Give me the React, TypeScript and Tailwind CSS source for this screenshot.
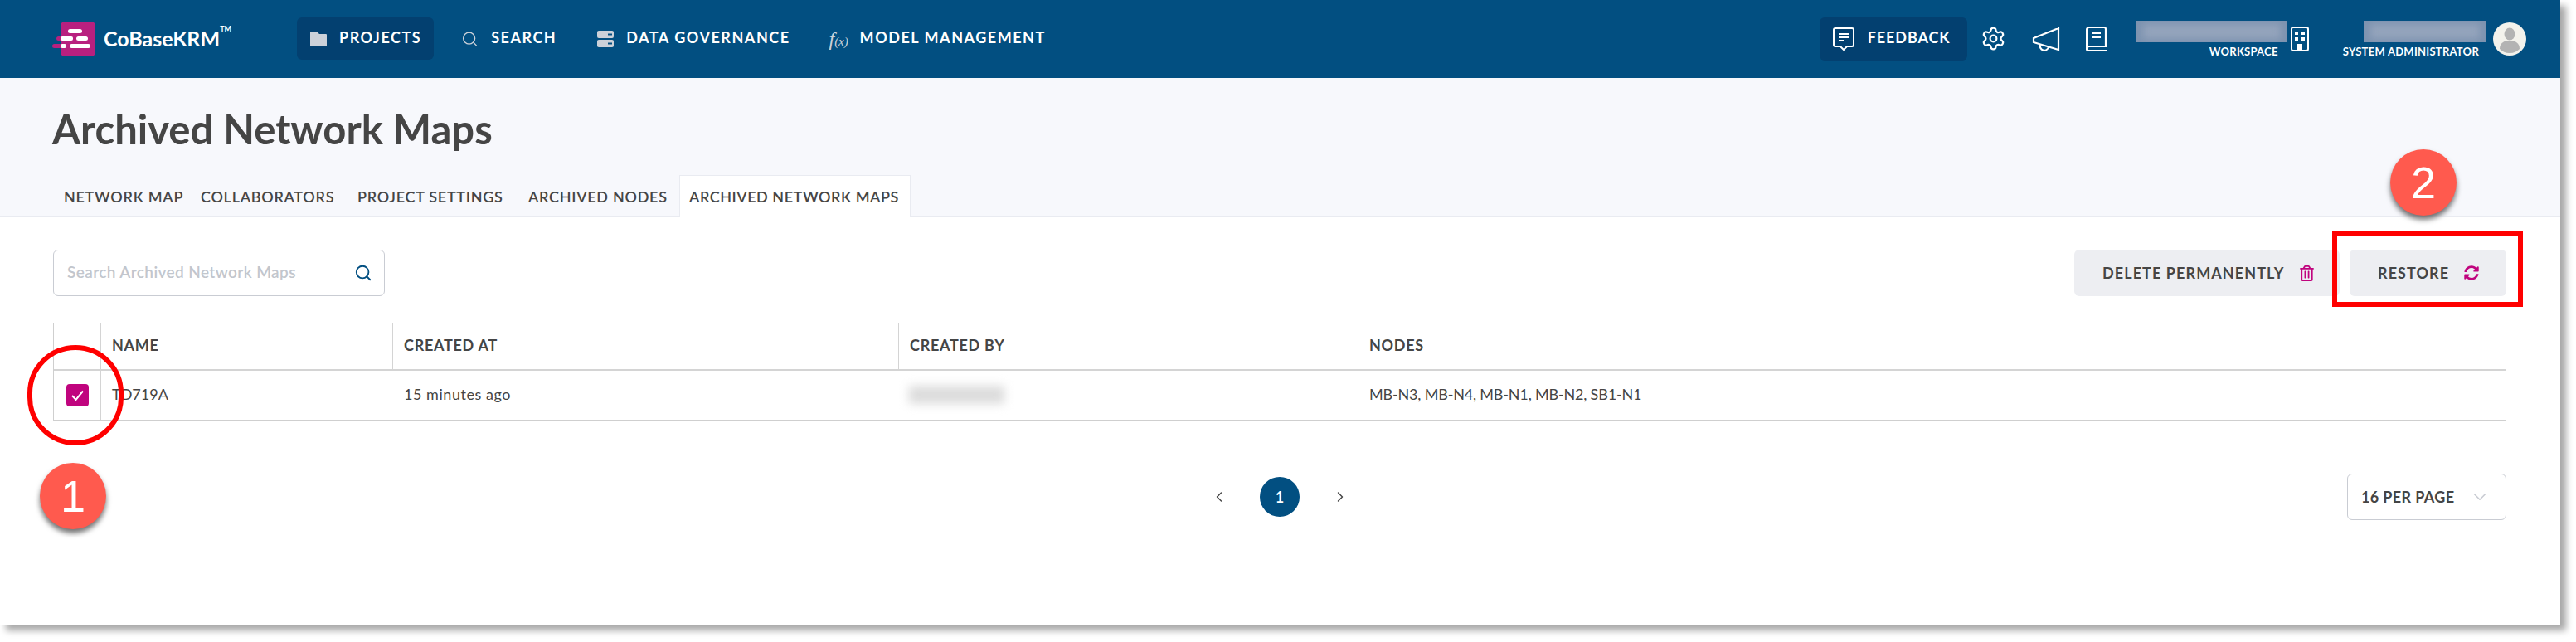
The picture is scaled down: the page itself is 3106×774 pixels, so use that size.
import { ChevronDown, ChevronLeft, ChevronRight, Search, Settings } from 'lucide-react';
import { FaRegTrashAlt, FaSyncAlt } from 'react-icons/fa';

const FONT = "font-['Lato','Liberation_Sans',sans-serif]";

function Logo() {
  return (
    <svg width="52" height="42" viewBox="0 0 52 42" className="shrink-0">
      <rect x="10" y="0" width="42" height="42" rx="5" fill="#b8207f" />
      <rect x="19" y="9" width="17" height="5" rx="2.5" fill="#fff" />
      <rect x="5" y="18" width="8" height="5" rx="2.5" fill="#b8207f" />
      <rect x="10" y="18" width="15" height="5" rx="2" fill="#fff" />
      <rect x="29" y="18" width="14" height="5" rx="2.5" fill="#fff" />
      <rect x="0" y="27" width="12" height="5" rx="2.5" fill="#b8207f" />
      <rect x="10" y="27" width="7" height="5" rx="2" fill="#fff" />
      <rect x="21" y="27" width="25" height="5" rx="2.5" fill="#fff" />
    </svg>
  );
}

function FolderIcon() {
  return (
    <svg width="20" height="18" viewBox="0 0 20 18" fill="#ccd1d9">
      <path d="M1 0h7l3 3h8a1 1 0 0 1 1 1v13a1 1 0 0 1-1 1H1a1 1 0 0 1-1-1V1a1 1 0 0 1 1-1z" />
    </svg>
  );
}

function DataIcon() {
  return (
    <svg width="20" height="20" viewBox="0 0 20 20">
      <rect y="0" width="20" height="9" rx="2" fill="#ccd1d9" />
      <rect y="11" width="20" height="9" rx="2" fill="#ccd1d9" />
      <rect x="13" y="3.5" width="2" height="2" fill="#024f81" />
      <rect x="16" y="3.5" width="2" height="2" fill="#024f81" />
      <rect x="13" y="14.5" width="2" height="2" fill="#024f81" />
      <rect x="16" y="14.5" width="2" height="2" fill="#024f81" />
    </svg>
  );
}

function FeedbackIcon() {
  return (
    <svg width="26" height="28" viewBox="0 0 26 28" fill="none" stroke="#fff" strokeWidth="2">
      <path d="M3 1h20a2 2 0 0 1 2 2v18a2 2 0 0 1-2 2h-6l-4 4-4-4H3a2 2 0 0 1-2-2V3a2 2 0 0 1 2-2z" />
      <path d="M7 8h12M7 12h12M7 16h6" />
    </svg>
  );
}

function MegaphoneIcon() {
  return (
    <svg width="34" height="30" viewBox="0 0 34 30" fill="none" stroke="#fff" strokeWidth="2.2">
      <path d="M32 1v28M32 2L2 14v5l30 9" />
      <path d="M10 22a5 5 0 0 0 10 3" />
    </svg>
  );
}

function BookIcon() {
  return (
    <svg width="26" height="30" viewBox="0 0 26 30" fill="none" stroke="#fff" strokeWidth="2.2">
      <path d="M5 1h17a2 2 0 0 1 2 2v21H4a3 3 0 0 0-3 3V4a3 3 0 0 1 3-3z" />
      <path d="M1 27a2 2 0 0 0 2 2h22M8 8h10M8 13h10" />
    </svg>
  );
}

function BuildingIcon() {
  return (
    <svg width="22" height="30" viewBox="0 0 22 30" fill="none">
      <rect x="1" y="1" width="20" height="28" rx="2" stroke="#fff" strokeWidth="2" />
      <g fill="#fff">
        <rect x="5" y="6" width="4" height="4" />
        <rect x="13" y="6" width="4" height="4" />
        <rect x="5" y="13" width="4" height="4" />
        <rect x="13" y="13" width="4" height="4" />
        <rect x="8" y="21" width="6" height="8" />
      </g>
    </svg>
  );
}

function Avatar() {
  return (
    <svg width="40" height="40" viewBox="0 0 40 40" className="shrink-0">
      <circle cx="20" cy="20" r="20" fill="#f3f2ec" />
      <ellipse cx="20" cy="14" rx="6.5" ry="7.5" fill="#b3b3b3" />
      <path d="M8 32c0-7 5-10 12-10s12 3 12 10c-3 3-7 5-12 5s-9-2-12-5z" fill="#b3b3b3" />
    </svg>
  );
}

function BlurName({ width }: { width: string }) {
  return (
    <div className={`${width} h-[26px] overflow-hidden bg-[#7d93b0]`}>
      <div className="mx-2 my-1 h-[18px] bg-[#94a4bc] blur-[5px]" />
    </div>
  );
}

function NavItem({ icon, label, active }: { icon: React.ReactNode; label: string; active?: boolean }) {
  return (
    <div
      className={`flex h-[51px] items-center gap-[15px] rounded-md px-[15px] text-[18px] font-bold tracking-[0.085em] text-white ${
        active ? 'bg-[#034070]' : ''
      }`}
    >
      <span className="flex w-[21px] justify-center">{icon}</span>
      <span className="pb-[2px]">{label}</span>
    </div>
  );
}

function Header() {
  return (
    <header className="flex h-[94px] items-center bg-[#024f81] pb-[1px] pl-[63px] pr-[41px]">
      <div className="flex w-[295px] items-center gap-[10px] text-white">
        <Logo />
        <span className="relative text-[25px] font-bold leading-none">
          CoBaseKRM
          <sup className="absolute -right-[14px] top-[1px] text-[9px] font-bold">TM</sup>
        </span>
      </div>
      <nav className="flex items-center gap-[18px]">
        <NavItem active icon={<FolderIcon />} label="PROJECTS" />
        <NavItem icon={<Search size={24} color="#ccd1d9" strokeWidth={1.6} />} label="SEARCH" />
        <NavItem icon={<DataIcon />} label="DATA GOVERNANCE" />
        <NavItem
          icon={
            <span className="whitespace-nowrap font-['Liberation_Serif',serif] text-[24px] font-normal italic leading-none tracking-normal text-[#ccd1d9]">
              f<span className="text-[15px]">(x)</span>
            </span>
          }
          label="MODEL MANAGEMENT"
        />
      </nav>
      <div className="ml-auto flex items-center">
        <div className="flex h-[52px] w-[178px] items-center gap-[16px] rounded-md bg-[#034070] px-[16px] text-[18px] font-bold tracking-[0.05em] text-white">
          <FeedbackIcon />
          <span className="pb-[2px]">FEEDBACK</span>
        </div>
        <div className="ml-[16px] flex items-center gap-[31px]">
          <Settings size={31} color="#fff" strokeWidth={1.7} />
          <MegaphoneIcon />
          <BookIcon />
        </div>
        <div className="ml-[35px] flex items-center gap-[4px]">
          <div className="flex flex-col items-end">
            <BlurName width="w-[182px]" />
            <span className="mr-[11px] mt-[5px] text-[13px] font-bold leading-[12px] tracking-[0.02em] text-white">WORKSPACE</span>
          </div>
          <BuildingIcon />
        </div>
        <div className="ml-[41px] flex items-center gap-[8px]">
          <div className="flex flex-col items-end">
            <BlurName width="w-[148px]" />
            <span className="mr-[9px] mt-[5px] text-[13px] font-bold leading-[12px] tracking-[0.02em] text-white">SYSTEM ADMINISTRATOR</span>
          </div>
          <Avatar />
        </div>
      </div>
    </header>
  );
}

const tabs = [
  { label: 'NETWORK MAP', width: 'w-[165px]' },
  { label: 'COLLABORATORS', width: 'w-[189px]' },
  { label: 'PROJECT SETTINGS', width: 'w-[206px]' },
  { label: 'ARCHIVED NODES', width: 'w-[194px]' },
];

function TitleBar() {
  return (
    <section className="h-[168px] border-b border-[#e9ebf1] bg-[#f7f8fc] pl-[63px] pt-[34px]">
      <h1 className="h-[84px] text-[49px] font-bold leading-[54px] text-[#454545]">Archived Network Maps</h1>
      <div className="flex h-[50px] items-end pl-[2px] text-[18px] font-semibold tracking-[0.04em] text-[#454545]">
        {tabs.map((tab) => (
          <div key={tab.label} className={`flex h-[50px] items-center whitespace-nowrap px-[12px] ${tab.width}`}>
            {tab.label}
          </div>
        ))}
        <div className="flex h-[51px] w-[279px] items-center whitespace-nowrap border-x border-t border-[#e9ebf1] bg-white px-[11px] tracking-[0.03em]">
          ARCHIVED NETWORK MAPS
        </div>
      </div>
    </section>
  );
}

function Toolbar() {
  return (
    <div className="flex items-center justify-between">
      <div className="flex h-[56px] w-[400px] items-center justify-between rounded-md border border-[#c9ccd3] pl-[16px] pr-[14px]">
        <span className="pb-[2px] text-[19px] font-semibold tracking-[0.4px] text-[#c2c6cd]">Search Archived Network Maps</span>
        <Search size={22} color="#024f81" />
      </div>
      <div className="flex gap-[12px]">
        <button className="flex h-[56px] w-[320px] items-center gap-[18px] rounded-md bg-[#edeef2] pl-[34px] text-[18px] font-bold tracking-[0.06em] text-[#454545]">
          DELETE PERMANENTLY
          <FaRegTrashAlt size={19} color="#c0047e" />
        </button>
        <button className="flex h-[56px] w-[189px] items-center gap-[18px] rounded-md bg-[#edeef2] pl-[34px] text-[18px] font-bold tracking-[0.06em] text-[#454545]">
          RESTORE
          <FaSyncAlt size={18} color="#c0047e" />
        </button>
      </div>
    </div>
  );
}

function CheckBox() {
  return (
    <div className="flex h-[27px] w-[27px] items-center justify-center rounded-[4px] bg-[#c0047e]">
      <svg width="17" height="14" viewBox="0 0 17 14" fill="none" stroke="#fff" strokeWidth="2">
        <path d="M2 7l4.5 5L15 1.5" />
      </svg>
    </div>
  );
}

function DataTable() {
  const grid = 'grid grid-cols-[56px_352px_610px_554px_1fr]';
  const head = 'flex items-center border-l border-[#d4d4d4] px-[13px] pb-[2px] tracking-[0.04em]';
  const cell = 'flex items-center px-[13px] pb-[2px]';
  return (
    <div className="mt-[32px] border border-[#cfcfcf] text-[18px] text-[#454545]">
      <div className={`${grid} h-[57px] border-b-2 border-[#d4d4d4] font-bold`}>
        <div />
        <div className={head}>NAME</div>
        <div className={head}>CREATED AT</div>
        <div className={head}>CREATED BY</div>
        <div className={head}>NODES</div>
      </div>
      <div className={`${grid} h-[59px]`}>
        <div className="flex items-center justify-center pl-[1px]">
          <CheckBox />
        </div>
        <div className={`${cell} border-l border-[#d4d4d4]`}>TD719A</div>
        <div className={`${cell} pl-[14px] tracking-[0.03em]`}>15 minutes ago</div>
        <div className={cell}>
          <div className="h-[22px] w-[115px] bg-[#dcdcdc] blur-[6px]" />
        </div>
        <div className={`${cell} pl-[14px] tracking-[-0.01em]`}>MB-N3, MB-N4, MB-N1, MB-N2, SB1-N1</div>
      </div>
    </div>
  );
}

function Pagination() {
  return (
    <div className="mt-[64px] grid grid-cols-[1fr_auto_1fr] items-center">
      <div />
      <div className="flex items-center gap-[39px] text-[#454545]">
        <ChevronLeft size={20} strokeWidth={1.7} />
        <div className="flex h-[48px] w-[48px] items-center justify-center rounded-full bg-[#024f81] text-[18px] font-bold text-white">
          1
        </div>
        <ChevronRight size={20} strokeWidth={1.7} />
      </div>
      <div className="flex justify-end">
        <div className="flex h-[56px] w-[192px] items-center gap-[18px] rounded-md border border-[#c9ccd3] pl-[16px] text-[18px] font-bold tracking-[0.02em] text-[#454545]">
          16 PER PAGE
          <ChevronDown size={26} color="#c9ccd3" strokeWidth={1.5} />
        </div>
      </div>
    </div>
  );
}

function StepBadge({ n, className }: { n: string; className: string }) {
  return (
    <div
      className={`absolute flex h-[80px] w-[80px] items-center justify-center rounded-full bg-[#ff5a4e] font-['Liberation_Sans',sans-serif] text-[54px] leading-none text-white shadow-[0_5px_6px_rgba(0,0,0,0.55)] ${className}`}
    >
      {n}
    </div>
  );
}

export default function App() {
  return (
    <div className="h-[774px] w-[3106px] overflow-hidden bg-white">
      <div className={`relative h-[753px] w-[3087px] bg-white shadow-[7px_7px_8px_rgba(0,0,0,0.35)] ${FONT}`}>
        <Header />
        <TitleBar />
        <main className="pl-[64px] pr-[65px] pt-[39px]">
          <Toolbar />
          <DataTable />
          <Pagination />
        </main>
        {/* annotations */}
        <div className="absolute left-[33px] top-[416px] h-[121px] w-[116px] rounded-full border-[6px] border-[#ff0000]" />
        <div className="absolute left-[2812px] top-[278px] h-[92px] w-[230px] border-[6px] border-[#ff0000]" />
        <StepBadge n="1" className="left-[48px] top-[558px]" />
        <StepBadge n="2" className="left-[2882px] top-[180px]" />
      </div>
    </div>
  );
}
